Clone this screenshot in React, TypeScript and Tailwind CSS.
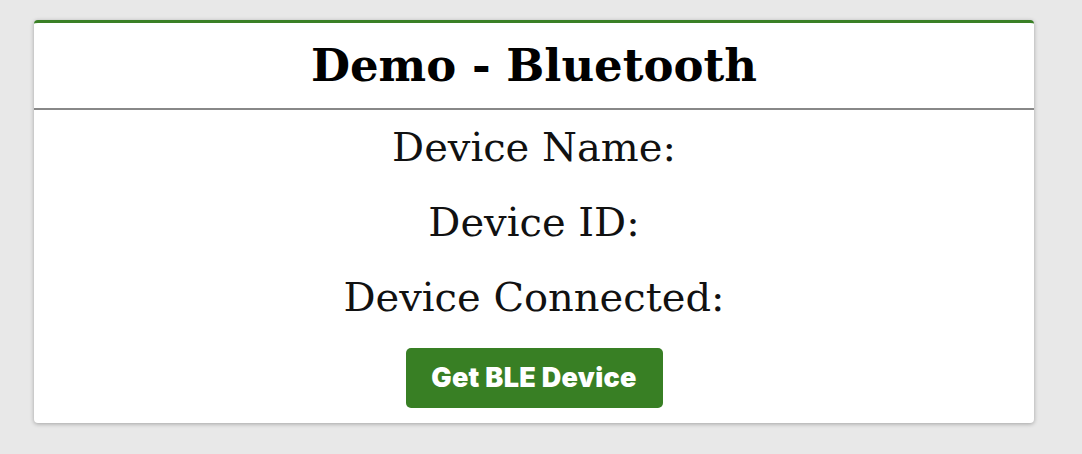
export default function App() {
  return (
    <div className="min-h-[454px] w-full bg-[#e8e8e8] pt-[20px]">
      <div className="ml-[34px] w-[1000px] overflow-hidden rounded-[4px] border-t-[3px] border-[#3a8026] bg-white shadow-[0_1px_4px_rgba(0,0,0,0.3)]">
        {/* header */}
        <div className="flex h-[87px] items-center justify-center border-b-2 border-[#888888]">
          <h1 className="font-['DejaVu_Serif',serif] text-[45px] font-bold text-black">
            Demo - Bluetooth
          </h1>
        </div>

        <div className="flex flex-col items-center pb-[15px] font-['DejaVu_Serif',serif] text-[40px] text-[#111]">
          <p className="leading-[75px]">Device Name:</p>
          <p className="leading-[75px]">Device ID:</p>
          <p className="leading-[75px]">Device Connected:</p>
          <button className="mt-[13px] h-[60px] w-[257px] rounded-[5px] bg-[#387f24] font-['Inter',sans-serif] text-[27px] font-black tracking-[0.3px] text-white">
            Get BLE Device
          </button>
        </div>
      </div>
    </div>
  );
}
